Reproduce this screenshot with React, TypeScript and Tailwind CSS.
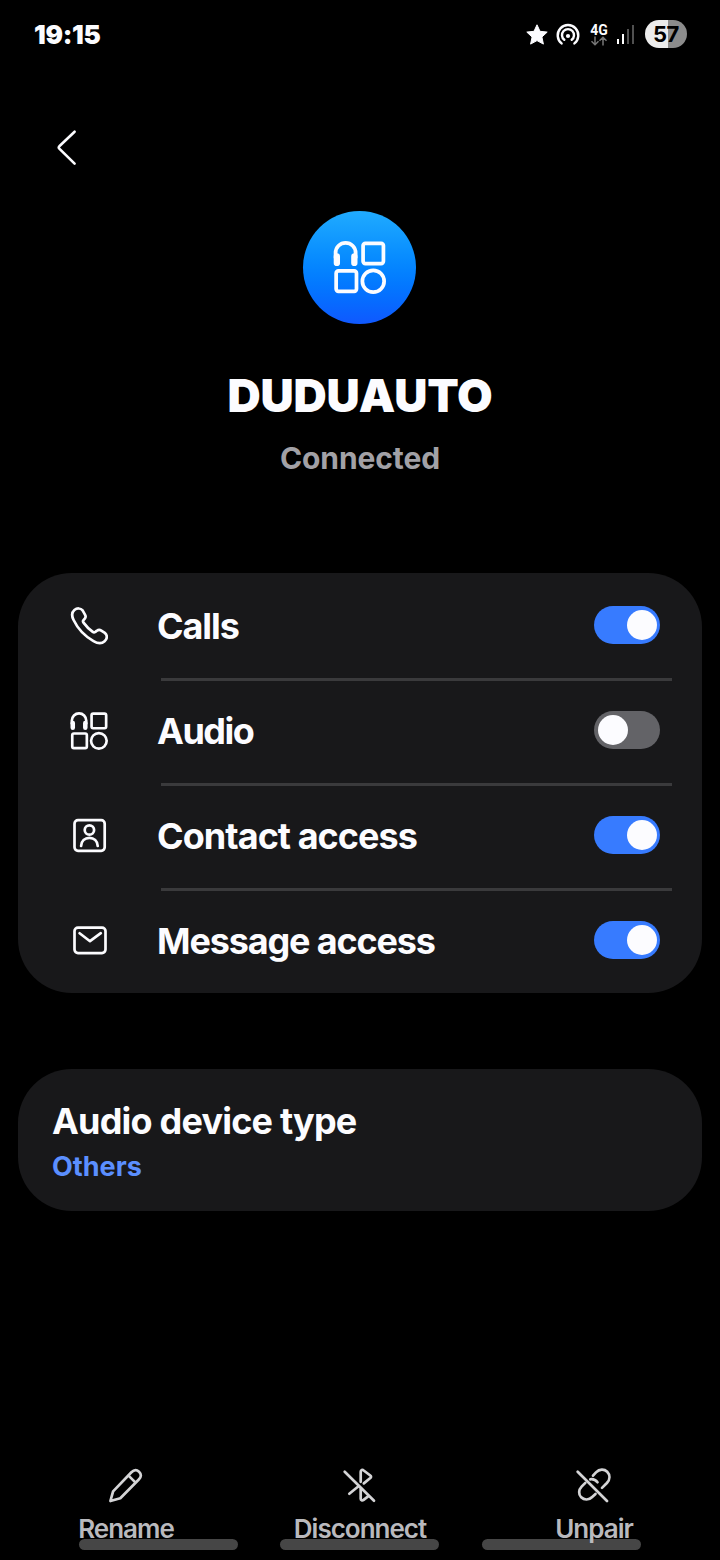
import React, { useState } from 'react';

interface IconProps {
  className?: string;
}

const AudioIcon: React.FC<IconProps> = ({ className }) => (
  <svg viewBox="0 0 37 37" fill="none" stroke="currentColor" strokeWidth="2.6" className={className}>
    <path d="M1.8 12V8.3a7 7 0 0 1 14 0V12" />
    <path d="M2.7 10.8v4.500M14.900 10.8v4.500" strokeWidth="4.400" strokeLinecap="round" />
    <rect x="21" y="1.6" width="14.2" height="14.2" rx="1.6" />
    <rect x="2.200" y="20.900" width="14.2" height="14.2" rx="1.6" />
    <circle cx="28.1" cy="28.1" r="7.6" />
  </svg>
);

const CallIcon: React.FC<IconProps> = ({ className }) => (
  <svg viewBox="0 0 38 38" fill="none" stroke="currentColor" strokeWidth="2.7" strokeLinejoin="round" className={className}>
    <path d="M12.6 3.4C10.6.8 6.8 1 4.4 3 1.6 5.4 1.6 9 3.6 13c4 8.400 11.400 16.200 19.900 21.100 4.200 2.500 8.400 2.600 11.100.2 2.800-2.500 3-6.200.2-8.400l-3.500-2.300c-1.500-1-3-.900-4.300.1l-1.700 1.200c-.9.6-1.700.6-2.500 0-3.600-2.600-6.700-5.700-9.300-9.300-.7-.9-.7-1.700 0-2.500l1.300-1.500c1-1.200 1.100-2.400.3-3.800z" />
  </svg>
);

const ContactIcon: React.FC<IconProps> = ({ className }) => (
  <svg viewBox="0 0 38 38" fill="none" stroke="currentColor" strokeWidth="2.7" strokeLinecap="round" className={className}>
    <rect x="4.500" y="3.200" width="30.200" height="30.600" rx="3.500" />
    <circle cx="19.400" cy="13" r="4.700" />
    <path d="M11.100 29c.3-5 3.700-8.100 8.300-8.100s8 3.100 8.300 8.100" />
  </svg>
);

const MessageIcon: React.FC<IconProps> = ({ className }) => (
  <svg viewBox="0 0 38 38" fill="none" stroke="currentColor" strokeWidth="2.7" strokeLinecap="round" strokeLinejoin="round" className={className}>
    <rect x="4.500" y="5.600" width="31" height="25.500" rx="3.500" />
    <path d="M9.600 11.200l10.400 8L30.800 11.200" />
  </svg>
);

const RenameIcon: React.FC<IconProps> = ({ className }) => (
  <svg viewBox="0 0 36 36" fill="none" stroke="currentColor" strokeWidth="2.700" strokeLinejoin="round" className={className}>
    <path d="M2.400 33l2.700-9.600L23.400 4.300c2.700-2.800 5.300-2.800 7.600-.6 2.500 2.400 2.500 5.100-.2 7.800L12.300 30.200z" />
    <path d="M20.300 7.400l7.300 7.200" />
  </svg>
);

const DisconnectIcon: React.FC<IconProps> = ({ className }) => (
  <svg viewBox="0 0 36 36" fill="none" stroke="currentColor" strokeWidth="2.700" strokeLinecap="round" strokeLinejoin="round" className={className}>
    <path d="M2.700 3.700L32 32.700" />
    <path d="M18.700 13.800V3.800c0-1.700 1.700-2.400 3-1.300l6.600 5c1 .8 1 1.600 0 2.500l-6.500 5.400" />
    <path d="M7.300 25.700L16.500 18.300" />
    <path d="M18.700 20.500v10.200c0 1.700 1.600 2.200 2.900 1.200l4.200-3.300" />
  </svg>
);

const UnpairIcon: React.FC<IconProps> = ({ className }) => (
  <svg viewBox="0 0 36 36" fill="none" stroke="currentColor" strokeWidth="2.700" strokeLinecap="round" className={className}>
    <path d="M1.700 3.700L31 33" />
    <path d="M17 7.700l3-3.300c3.500-3.500 8.200-3.500 11.200-.6 3 3.100 3 7.700-.3 11.200L26 19.900" />
    <path d="M9.300 14.900l-3.500 3.500c-3.400 3.500-3.400 8-.6 10.900 3 3 7.700 3 11-.3l3.300-3" />
    <path d="M14.300 11.300c3-.4 5.300.5 7.200 3" />
  </svg>
);

interface SwitchProps {
  checked: boolean;
  onChange: () => void;
}

const Switch: React.FC<SwitchProps> = ({ checked, onChange }) => (
  <button
    role="switch"
    aria-checked={checked}
    onClick={onChange}
    className={`mb-px flex h-[38px] w-[66px] items-center rounded-full pl-[4px] pr-[3px] ${
      checked ? 'justify-end bg-[#377bff]' : 'justify-start bg-[#636367]'
    }`}
  >
    <span className="h-[30px] w-[30px] rounded-full bg-[#fcfcff]"></span>
  </button>
);

const StatusBar: React.FC = () => (
  <div className="flex h-[70px] items-center justify-between pl-[34px] pr-[33px]">
    <span className="text-[26px] font-black leading-none tracking-[-0.3px]">19:15</span>
    <div className="flex h-7 items-center">
      <svg viewBox="0 0 22 22" fill="currentColor" className="mr-[8px] h-[22px] w-[22px]">
        <path d="M11 .8l3 6.500 7.200.8-5.300 4.900 1.500 7.100L11 16.600l-6.400 3.500 1.500-7.100L.8 8.100 8 7.300z" stroke="currentColor" strokeLinejoin="round" />
      </svg>
      <svg viewBox="0 0 24 24" fill="none" stroke="currentColor" strokeWidth="2.400" strokeLinecap="round" className="mr-[10px] h-6 w-6">
        <path d="M5.600 20.400a10.300 10.300 0 1 1 12.800 0" />
        <path d="M8.300 16.800a6 6 0 1 1 7.400 0" />
        <circle cx="12" cy="13" r="2.100" fill="currentColor" stroke="none" />
      </svg>
      <div className="mb-px mr-[9px] flex w-[18px] flex-col items-center">
        <span className="font-[Roboto] text-[14px] font-bold leading-[12px]">4G</span>
        <svg viewBox="0 0 18 10" fill="none" stroke="#777" strokeWidth="1.500" className="h-[10px] w-[18px]">
          <path d="M5 .5v8M1.500 5.200L5 8.700l3.500-3.500M13 9.500v-8M9.500 4.800L13 1.300l3.500 3.500" />
        </svg>
      </div>
      <div className="mb-[2px] mr-[11px] flex h-5 items-end gap-[3px]">
        <span className="h-[5px] w-[2px] bg-white"></span>
        <span className="h-[10px] w-[2px] bg-white"></span>
        <span className="h-[15px] w-[2px] bg-[#505050]"></span>
        <span className="h-[19px] w-[2px] bg-[#505050]"></span>
      </div>
      <div className="mb-[2px] flex h-7 w-[42px] items-center justify-center rounded-full bg-linear-to-r from-[#ececec] from-[55%] to-[#8c8c8c] to-[55%]">
        <span className="text-[22px] font-bold leading-none tracking-[-0.5px] text-black">57</span>
      </div>
    </div>
  </div>
);

const profiles = [
  { id: 'calls', label: 'Calls', icon: CallIcon, tracking: 'tracking-[-1.1px]' },
  { id: 'audio', label: 'Audio', icon: AudioIcon, tracking: 'tracking-[-1.5px]' },
  { id: 'contacts', label: 'Contact access', icon: ContactIcon, tracking: 'tracking-[-0.95px]' },
  { id: 'messages', label: 'Message access', icon: MessageIcon, tracking: 'tracking-[-1.15px]' },
];

const actions = [
  { label: 'Rename', icon: RenameIcon },
  { label: 'Disconnect', icon: DisconnectIcon },
  { label: 'Unpair', icon: UnpairIcon },
];

const App: React.FC = () => {
  const [enabled, setEnabled] = useState<Record<string, boolean>>({
    calls: true,
    audio: false,
    contacts: true,
    messages: true,
  });

  const toggle = (id: string) => {
    setEnabled((prev) => ({ ...prev, [id]: !prev[id] }));
  };

  return (
    <div className="relative flex h-[1560px] w-[720px] flex-col overflow-hidden bg-black font-[Inter,sans-serif] text-[#fcfcff]">
      <StatusBar />

      {/* Header */}
      <header className="flex h-[141px] pl-[56px] pt-[59px]">
        <button aria-label="Back" className="h-[37px] w-[22px]">
          <svg viewBox="0 0 22 37" fill="none" stroke="currentColor" strokeWidth="2.600" strokeLinecap="round" strokeLinejoin="round" className="h-full w-full">
            <path d="M18.600 2.700L3.300 17.300c-.8.800-.8 1.500 0 2.300L18.600 34.600" />
          </svg>
        </button>
      </header>

      {/* Device */}
      <section className="flex h-[362px] flex-col items-center">
        <div className="mr-px flex h-[113px] w-[113px] items-center justify-center rounded-full bg-linear-to-b from-[#20abff] to-[#1058ff] pb-px pr-px">
          <AudioIcon className="h-[53px] w-[53px]" />
        </div>
        <h1 className="mt-[43px] text-[46px] font-black leading-[56px] tracking-[-0.2px]">DUDUAUTO</h1>
        <p className="mt-[17px] text-[30px] font-bold leading-[36px] tracking-[-0.1px] text-[#a2a1a6]">Connected</p>
      </section>

      {/* Profiles */}
      <section className="mx-[18px] rounded-[54px] bg-[#18181a]">
        {profiles.map(({ id, label, icon: Icon, tracking }, index) => (
          <div key={id}>
            {index > 0 && <div className="-mb-[3px] ml-[143px] mr-[30px] h-[3px] bg-[#3a3a3c]"></div>}
            <div className="flex h-[105px] items-center pl-[52px] pr-[42px]">
              <Icon className="h-[38px] w-[38px]" />
              <span className={`ml-[49px] flex-1 text-[36px] font-bold leading-[44px] ${tracking}`}>{label}</span>
              <Switch checked={enabled[id]} onChange={() => toggle(id)} />
            </div>
          </div>
        ))}
      </section>

      {/* Device type */}
      <section className="mx-[18px] mt-[76px] h-[142px] rounded-[54px] bg-[#18181a] px-[34px] pt-[30px]">
        <p className="text-[36px] font-bold leading-[44px] tracking-[-0.8px]">Audio device type</p>
        <p className="mt-[7px] text-[27px] font-bold leading-[34px] text-[#5b8fff]">Others</p>
      </section>

      {/* Gesture hints, painted below the action labels */}
      <div className="pointer-events-none absolute bottom-[10px] left-[79px] flex gap-[42px]">
        <span className="h-[11px] w-[159px] rounded-full bg-[#464646]"></span>
        <span className="h-[11px] w-[159px] rounded-full bg-[#464646]"></span>
        <span className="ml-px h-[11px] w-[159px] rounded-full bg-[#464646]"></span>
      </div>

      {/* Actions */}
      <footer className="relative z-10 mt-auto grid h-[92px] grid-cols-3 px-[9px] text-[#b9b9bd]">
        {actions.map(({ label, icon: Icon }) => (
          <button key={label} className="flex flex-col items-center">
            <Icon className="h-9 w-9 text-[#d4d4d6]" />
            <span className="mt-[9px] text-[26px] font-semibold leading-[32px] tracking-[-1px]">{label}</span>
          </button>
        ))}
      </footer>
    </div>
  );
};

export default App;
